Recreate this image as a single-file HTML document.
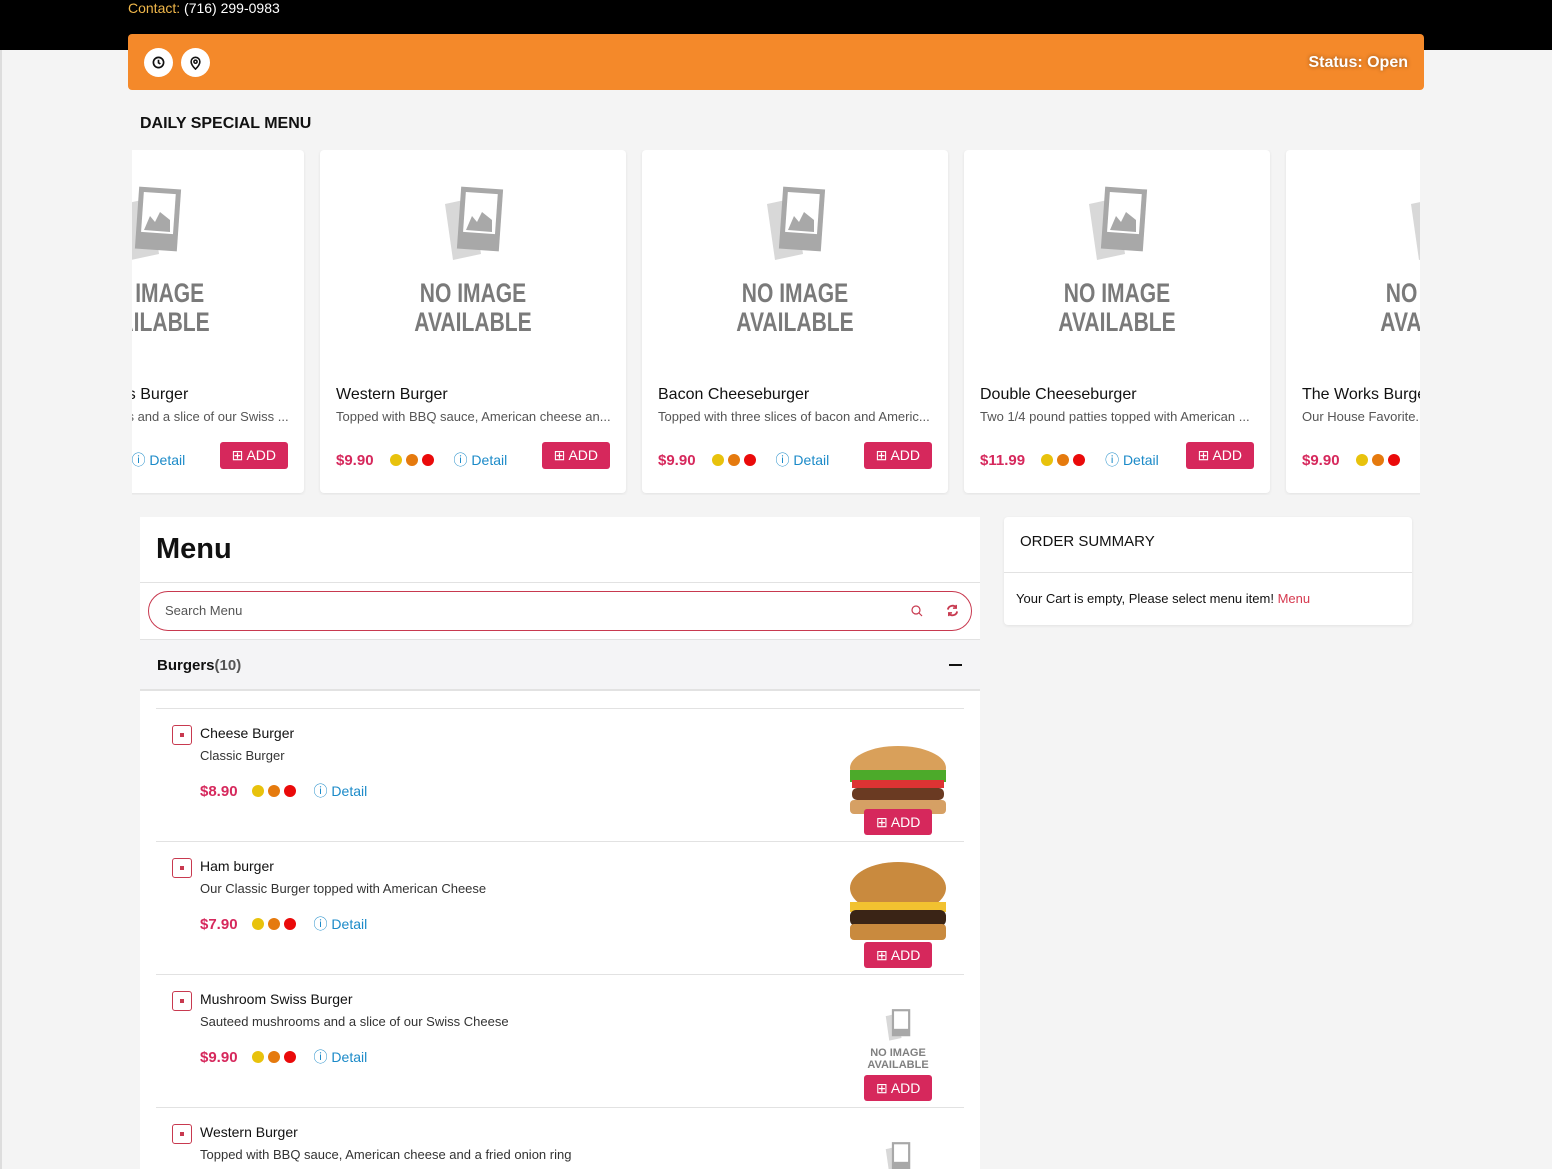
<!DOCTYPE html>
<html><head><meta charset="utf-8"><style>
*{box-sizing:border-box;margin:0;padding:0}
html,body{width:1552px;height:1169px;overflow:hidden}
body{background:#f4f4f4;font-family:"Liberation Sans",sans-serif;color:#111;position:relative}
.a{position:absolute}
.top{left:0;top:0;width:1552px;height:50px;background:#000}
.bar{left:128px;top:34px;width:1296px;height:56px;background:#f4892a;border-radius:4px}
.circ{width:29px;height:29px;border-radius:50%;background:#fff;top:14px;display:flex;align-items:center;justify-content:center}
.car{left:132px;top:150px;width:1288px;height:345px;overflow:hidden}
.card{top:0;width:306px;height:343px;background:#fff;border-radius:4px;box-shadow:0 1px 3px rgba(0,0,0,.08)}
.noimg{left:0;top:32px;width:306px;text-align:center}
.nt{font-family:"Liberation Sans Narrow","Liberation Sans",sans-serif;font-weight:bold;font-size:27px;color:#7a7a7a;line-height:29px;transform:scaleX(.78);margin-top:12px}
.ct{left:16px;top:236px;font-size:16px;white-space:nowrap}
.cd{left:16px;top:259px;font-size:13px;color:#555;white-space:nowrap}
.price{font-weight:bold;color:#d6285c;font-size:15px}
.dots span{display:inline-block;width:12px;height:12px;border-radius:50%;margin-right:4px;vertical-align:middle}
.y{background:#e8c20c}.o{background:#e57a0e}.r{background:#ea0a0a}
.det{color:#1b8ac8;font-size:14px;white-space:nowrap}
.add{background:#d6285c;color:#fff;font-size:14px;border-radius:3px;height:27px;line-height:27px;padding:0 12px}
.panel{left:140px;top:517px;width:840px;height:652px;background:#fff}
.sum{left:1004px;top:517px;width:408px;height:108px;background:#fff;border-radius:4px;box-shadow:0 1px 3px rgba(0,0,0,.08)}
.chk{width:20px;height:20px;border:1px solid #c8394f;border-radius:3px}
.chk:after{content:"";position:absolute;left:7px;top:7px;width:4px;height:4px;background:#c8394f}
.hl{left:156px;width:808px;height:1px;background:#e2e2e2}
</style></head><body>
<div class="a top"><div class="a" style="left:128px;top:0;font-size:14px;color:#fff"><span style="color:#f0b74a">Contact:</span> (716) 299-0983</div></div>
<div class="a" style="left:0;top:50px;width:2px;height:1119px;background:#ddd"></div>
<div class="a bar">
 <div class="a circ" style="left:16px"><svg width="13" height="13" viewBox="0 0 14 14" fill="none" stroke="#111" stroke-width="1.8"><circle cx="7" cy="7" r="5.5"/><path d="M7 4v3.3l2 1.3"/></svg></div>
 <div class="a circ" style="left:53px"><svg width="13" height="14" viewBox="0 0 14 16" fill="none" stroke="#111" stroke-width="1.8"><path d="M7 15s5-5 5-8.5A5 5 0 0 0 2 6.5C2 10 7 15 7 15z"/><circle cx="7" cy="6.5" r="1.8"/></svg></div>
 <div class="a" style="right:16px;top:20px;color:#fff;font-weight:bold;font-size:16px;text-shadow:0 0 4px rgba(0,0,0,.4)">Status: Open</div>
</div>
<div class="a" style="left:140px;top:115px;font-size:16px;font-weight:bold;color:#111">DAILY SPECIAL MENU</div>
<div class="a car">
<div class="a card" style="left:-134px">
 <div class="a noimg"><svg width="64" height="80" viewBox="0 0 64 80"><path d="M4 22l28-6 8 56-28 6z" fill="#d8d8d8"/><rect x="18" y="6" width="42" height="62" fill="#a8a8a8" transform="rotate(4 39 37)"/><rect x="23" y="11" width="32" height="40" fill="#fff" transform="rotate(4 39 37)"/><path d="M25 48l6-14 5 6 5-10 10 8v12z" fill="#a8a8a8"/></svg><div class="nt">NO IMAGE<br>AVAILABLE</div></div>
 <div class="a ct">Mushroom Swiss Burger</div><div class="a cd">Sauteed mushrooms and a slice of our Swiss ...</div>
 <div class="a" style="left:16px;top:300px;display:flex;align-items:center;gap:16px"><span class="price">$9.90</span><span class="dots"><span class="y"></span><span class="o"></span><span class="r"></span></span><span class="det">ⓘ Detail</span></div>
 <div class="a add" style="right:16px;top:292px">⊞ ADD</div>
</div>
<div class="a card" style="left:188px">
 <div class="a noimg"><svg width="64" height="80" viewBox="0 0 64 80"><path d="M4 22l28-6 8 56-28 6z" fill="#d8d8d8"/><rect x="18" y="6" width="42" height="62" fill="#a8a8a8" transform="rotate(4 39 37)"/><rect x="23" y="11" width="32" height="40" fill="#fff" transform="rotate(4 39 37)"/><path d="M25 48l6-14 5 6 5-10 10 8v12z" fill="#a8a8a8"/></svg><div class="nt">NO IMAGE<br>AVAILABLE</div></div>
 <div class="a ct">Western Burger</div><div class="a cd">Topped with BBQ sauce, American cheese an...</div>
 <div class="a" style="left:16px;top:300px;display:flex;align-items:center;gap:16px"><span class="price">$9.90</span><span class="dots"><span class="y"></span><span class="o"></span><span class="r"></span></span><span class="det">ⓘ Detail</span></div>
 <div class="a add" style="right:16px;top:292px">⊞ ADD</div>
</div>
<div class="a card" style="left:510px">
 <div class="a noimg"><svg width="64" height="80" viewBox="0 0 64 80"><path d="M4 22l28-6 8 56-28 6z" fill="#d8d8d8"/><rect x="18" y="6" width="42" height="62" fill="#a8a8a8" transform="rotate(4 39 37)"/><rect x="23" y="11" width="32" height="40" fill="#fff" transform="rotate(4 39 37)"/><path d="M25 48l6-14 5 6 5-10 10 8v12z" fill="#a8a8a8"/></svg><div class="nt">NO IMAGE<br>AVAILABLE</div></div>
 <div class="a ct">Bacon Cheeseburger</div><div class="a cd">Topped with three slices of bacon and Americ...</div>
 <div class="a" style="left:16px;top:300px;display:flex;align-items:center;gap:16px"><span class="price">$9.90</span><span class="dots"><span class="y"></span><span class="o"></span><span class="r"></span></span><span class="det">ⓘ Detail</span></div>
 <div class="a add" style="right:16px;top:292px">⊞ ADD</div>
</div>
<div class="a card" style="left:832px">
 <div class="a noimg"><svg width="64" height="80" viewBox="0 0 64 80"><path d="M4 22l28-6 8 56-28 6z" fill="#d8d8d8"/><rect x="18" y="6" width="42" height="62" fill="#a8a8a8" transform="rotate(4 39 37)"/><rect x="23" y="11" width="32" height="40" fill="#fff" transform="rotate(4 39 37)"/><path d="M25 48l6-14 5 6 5-10 10 8v12z" fill="#a8a8a8"/></svg><div class="nt">NO IMAGE<br>AVAILABLE</div></div>
 <div class="a ct">Double Cheeseburger</div><div class="a cd">Two 1/4 pound patties topped with American ...</div>
 <div class="a" style="left:16px;top:300px;display:flex;align-items:center;gap:16px"><span class="price">$11.99</span><span class="dots"><span class="y"></span><span class="o"></span><span class="r"></span></span><span class="det">ⓘ Detail</span></div>
 <div class="a add" style="right:16px;top:292px">⊞ ADD</div>
</div>
<div class="a card" style="left:1154px">
 <div class="a noimg"><svg width="64" height="80" viewBox="0 0 64 80"><path d="M4 22l28-6 8 56-28 6z" fill="#d8d8d8"/><rect x="18" y="6" width="42" height="62" fill="#a8a8a8" transform="rotate(4 39 37)"/><rect x="23" y="11" width="32" height="40" fill="#fff" transform="rotate(4 39 37)"/><path d="M25 48l6-14 5 6 5-10 10 8v12z" fill="#a8a8a8"/></svg><div class="nt">NO IMAGE<br>AVAILABLE</div></div>
 <div class="a ct">The Works Burger</div><div class="a cd">Our House Favorite. Topped with...</div>
 <div class="a" style="left:16px;top:300px;display:flex;align-items:center;gap:16px"><span class="price">$9.90</span><span class="dots"><span class="y"></span><span class="o"></span><span class="r"></span></span><span class="det">ⓘ Detail</span></div>
</div>
</div>

<div class="a panel">
 <div class="a" style="left:16px;top:16px;font-size:29px;font-weight:bold">Menu</div>
 <div class="a" style="left:0;top:65px;width:840px;height:1px;background:#e2e2e2"></div>
 <div class="a" style="left:8px;top:74px;width:824px;height:40px;border:1px solid #c8394f;border-radius:20px">
  <div class="a" style="left:16px;top:11px;font-size:13px;color:#555">Search Menu</div>
  <svg class="a" style="left:762px;top:13px" width="12" height="12" viewBox="0 0 12 12" fill="none" stroke="#c8394f" stroke-width="1.2"><circle cx="5" cy="5" r="4"/><path d="M8 8l3 3"/></svg>
  <svg class="a" style="left:797px;top:12px" width="13" height="13" viewBox="0 0 14 14" fill="none" stroke="#c8394f" stroke-width="2"><path d="M2 6a5 5 0 0 1 9-2M12 8a5 5 0 0 1-9 2"/><path d="M11 1v3.5H7.5M3 13V9.5h3.5" stroke-width="1.6"/></svg>
 </div>
 <div class="a" style="left:0;top:122px;width:840px;height:52px;background:#f4f4f6;border-top:1px solid #e2e2e2;border-bottom:2px solid #e2e2e2">
  <div class="a" style="left:17px;top:17px;font-size:15px;font-weight:bold">Burgers<span style="color:#555">(10)</span></div>
  <div class="a" style="left:809px;top:24px;width:13px;height:2px;background:#111"></div>
 </div>
</div>
<div class="a hl" style="top:708px"></div>
<div class="a hl" style="top:841px"></div>
<div class="a hl" style="top:974px"></div>
<div class="a hl" style="top:1107px"></div>

<div class="a chk" style="left:172px;top:725px"></div>
<div class="a" style="left:200px;top:725px;font-size:14px">Cheese Burger</div>
<div class="a" style="left:200px;top:748px;font-size:13px;color:#333">Classic Burger</div>
<div class="a" style="left:200px;top:781px;display:flex;align-items:center;gap:14px"><span class="price">$8.90</span><span class="dots"><span class="y"></span><span class="o"></span><span class="r"></span></span><span class="det">ⓘ Detail</span></div>
<svg class="a" style="left:848px;top:746px" width="100" height="70" viewBox="0 0 100 70"><ellipse cx="50" cy="22" rx="48" ry="22" fill="#d9a05a"/><rect x="2" y="24" width="96" height="12" fill="#4caa2a"/><rect x="4" y="34" width="92" height="8" fill="#d33"/><rect x="4" y="42" width="92" height="12" rx="5" fill="#6a3a22"/><rect x="2" y="54" width="96" height="14" rx="4" fill="#d6a064"/></svg>
<div class="a add" style="left:864px;top:809px;height:26px;line-height:26px;padding:0 12px">⊞ ADD</div>

<div class="a chk" style="left:172px;top:858px"></div>
<div class="a" style="left:200px;top:858px;font-size:14px">Ham burger</div>
<div class="a" style="left:200px;top:881px;font-size:13px;color:#333">Our Classic Burger topped with American Cheese</div>
<div class="a" style="left:200px;top:914px;display:flex;align-items:center;gap:14px"><span class="price">$7.90</span><span class="dots"><span class="y"></span><span class="o"></span><span class="r"></span></span><span class="det">ⓘ Detail</span></div>
<svg class="a" style="left:848px;top:862px" width="100" height="80" viewBox="0 0 100 80"><ellipse cx="50" cy="26" rx="48" ry="26" fill="#c98a3e"/><rect x="2" y="40" width="96" height="10" fill="#f2c230"/><rect x="2" y="48" width="96" height="16" rx="6" fill="#3a2416"/><rect x="2" y="62" width="96" height="16" rx="4" fill="#c98a3e"/></svg>
<div class="a add" style="left:864px;top:942px;height:26px;line-height:26px;padding:0 12px">⊞ ADD</div>

<div class="a chk" style="left:172px;top:991px"></div>
<div class="a" style="left:200px;top:991px;font-size:14px">Mushroom Swiss Burger</div>
<div class="a" style="left:200px;top:1014px;font-size:13px;color:#333">Sauteed mushrooms and a slice of our Swiss Cheese</div>
<div class="a" style="left:200px;top:1047px;display:flex;align-items:center;gap:14px"><span class="price">$9.90</span><span class="dots"><span class="y"></span><span class="o"></span><span class="r"></span></span><span class="det">ⓘ Detail</span></div>
<div class="a" style="left:848px;top:1006px;width:100px;text-align:center"><svg width="28" height="36" viewBox="0 0 64 80"><path d="M4 22l28-6 8 56-28 6z" fill="#d8d8d8"/><rect x="18" y="6" width="42" height="62" fill="#a8a8a8"/><rect x="23" y="11" width="32" height="40" fill="#fff"/></svg><div style="font-size:11px;color:#808080;line-height:12px;font-weight:bold">NO IMAGE<br>AVAILABLE</div></div>
<div class="a add" style="left:864px;top:1075px;height:26px;line-height:26px;padding:0 12px">⊞ ADD</div>

<div class="a chk" style="left:172px;top:1124px"></div>
<div class="a" style="left:200px;top:1124px;font-size:14px">Western Burger</div>
<div class="a" style="left:200px;top:1147px;font-size:13px;color:#333">Topped with BBQ sauce, American cheese and a fried onion ring</div>
<div class="a" style="left:884px;top:1139px"><svg width="28" height="36" viewBox="0 0 64 80"><path d="M4 22l28-6 8 56-28 6z" fill="#d8d8d8"/><rect x="18" y="6" width="42" height="62" fill="#a8a8a8"/><rect x="23" y="11" width="32" height="40" fill="#fff"/></svg></div>

<div class="a sum">
 <div class="a" style="left:16px;top:16px;font-size:15px">ORDER SUMMARY</div>
 <div class="a" style="left:0;top:55px;width:408px;height:1px;background:#e2e2e2"></div>
 <div class="a" style="left:12px;top:74px;font-size:13px;white-space:nowrap">Your Cart is empty, Please select menu item! <span style="color:#d6394f">Menu</span></div>
</div>
</body></html>
